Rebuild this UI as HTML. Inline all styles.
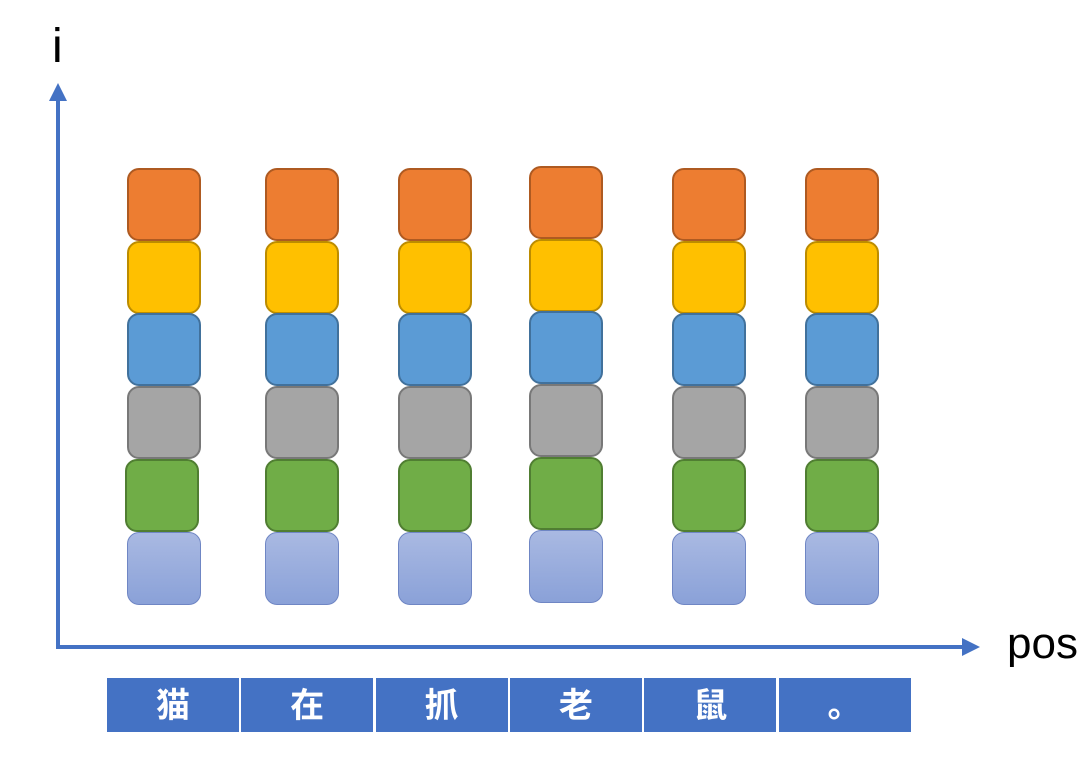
<!DOCTYPE html>
<html><head><meta charset="utf-8"><style>
body{margin:0;width:1092px;height:779px;background:#fff;position:relative;overflow:hidden;font-family:"Liberation Sans","Noto Sans CJK SC",sans-serif}
.b{position:absolute;width:74px;height:73px;border-radius:12px;box-sizing:border-box;border:2px solid}
.o{background:#ed7d31;border-color:#ae5a21}
.y{background:#ffc000;border-color:#bc8c00}
.bl{background:#5b9bd5;border-color:#41719c}
.g{background:#a5a5a5;border-color:#787878}
.gr{background:#70ad47;border-color:#507e32}
.l{background:linear-gradient(#a9b9e2,#8aa1d8);border-color:#6f86c4;border-width:1.5px}
.t{position:absolute;top:678px;height:54px;background:#4472c4;color:#fff;font-size:34px;font-weight:bold;text-align:center;line-height:56px;font-family:"Liberation Sans","Noto Sans CJK SC",sans-serif}
</style></head><body>
<div style="position:absolute;left:52px;top:22px;font-size:48px;line-height:50px">i</div>
<div style="position:absolute;left:1007px;top:619px;font-size:44px;line-height:50px">pos</div>
<svg width="1092" height="779" style="position:absolute;left:0;top:0">
<path d="M58 95 V647 H966" stroke="#4472c4" stroke-width="4" fill="none"/>
<polygon points="58,83 49,101 67,101" fill="#4472c4"/>
<polygon points="980,647 962,638 962,656" fill="#4472c4"/>
</svg>
<div id="c"></div>
<script>
var xs=[127,265,398,529,672,805],dy=[0,0,0,-2,0,0],cl=['o','y','bl','g','gr','l'],ys=[168,241,313,386,459,532],h='';
xs.forEach(function(x,i){cl.forEach(function(c,j){var xx=x;if(c=='gr'&&i==0)xx-=2;h+='<div class="b '+c+'" style="left:'+xx+'px;top:'+(ys[j]+dy[i])+'px"></div>';});});
var w=['猫','在','抓','老','鼠','。'];
w.forEach(function(t,i){h+='<div class="t" style="left:'+(107+i*134.3)+'px;width:132px">'+t+'</div>';});
document.getElementById('c').innerHTML=h;
</script>
</body></html>
